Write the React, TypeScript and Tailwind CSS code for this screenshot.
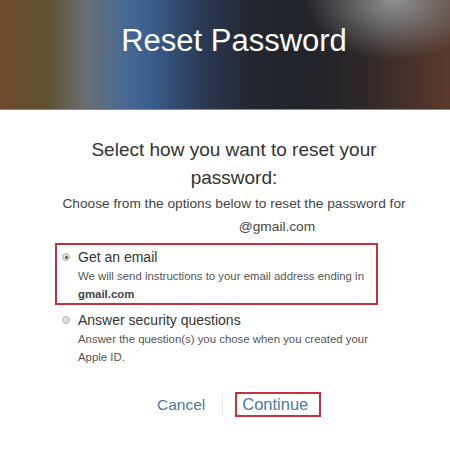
const banner =
  "bg-[radial-gradient(ellipse_90px_60px_at_395px_0px,#8e9193_0%,rgba(142,145,147,0)_100%),linear-gradient(90deg,#6e4a2c_0%,#5f5232_11%,#6a6f72_19%,#4b6a92_27%,#3a5f8f_33%,#2b3c58_44%,#22262f_56%,#23242a_70%,#2c2628_80%,#45302a_90%,#5a3a2a_100%)]";

function Radio({ checked }: { checked?: boolean }) {
  return (
    <span className="mt-[6px] flex h-[8px] w-[8px] shrink-0 items-center justify-center rounded-full border border-[#b9b9b9] bg-[#dcdcdc]">
      {checked && <span className="h-[3px] w-[3px] rounded-full bg-[#555]" />}
    </span>
  );
}

export default function App() {
  return (
    <div className="h-[449px] w-[450px] overflow-hidden bg-white font-['Liberation_Sans',Arial,sans-serif]">
      <header className={`flex h-[110px] justify-center border-b border-[#8a8a8a] pl-[18px] pt-[23px] ${banner}`}>
        <h1 className="text-[31px] leading-[36px] text-white">Reset Password</h1>
      </header>

      <main className="pl-[18px]">
        <h2 className="mx-auto mt-[26px] w-[300px] text-center text-[19px] leading-[28px] text-[#333]">
          Select how you want to reset your password:
        </h2>

        <div className="text-center text-[13.7px] leading-[23px] text-[#444]">
          <p className="whitespace-nowrap">Choose from the options below to reset the password for</p>
          <p>
            <span className="inline-block w-[86px]" />
            @gmail.com
          </p>
        </div>

        <div className="ml-[37px] mt-[5px] w-[323px]">
          <label className="flex border-2 border-[#c4323e] pl-[5px] pt-[2px]">
            <Radio checked />
            <div className="ml-[8px]">
              <p className="text-[14px] leading-[20px] text-[#333]">Get an email</p>
              <p className="whitespace-nowrap text-[11.4px] leading-[18px] text-[#555]">
                We will send instructions to your email address ending in
                <br />
                <span className="font-bold text-[#444]">gmail.com</span>
              </p>
            </div>
          </label>

          <label className="mt-[5px] flex pl-[7px]">
            <Radio />
            <div className="ml-[8px]">
              <p className="text-[14px] leading-[20px] text-[#333]">Answer security questions</p>
              <p className="whitespace-nowrap text-[11.4px] leading-[18px] text-[#555]">
                Answer the question(s) you chose when you created your
                <br />
                Apple ID.
              </p>
            </div>
          </label>
        </div>

        <div className="mt-[26px] flex items-center pl-[139px] text-[15.5px] leading-[20px] text-[#4e78a3]">
          <span>Cancel</span>
          <span className="ml-[17px] h-[22px] w-px bg-[#e6e6e6]" />
          <span className="ml-[12px] border-2 border-[#c4323e] pb-px pl-[5px] pr-[11px] text-[16.5px]">Continue</span>
        </div>
      </main>
    </div>
  );
}
